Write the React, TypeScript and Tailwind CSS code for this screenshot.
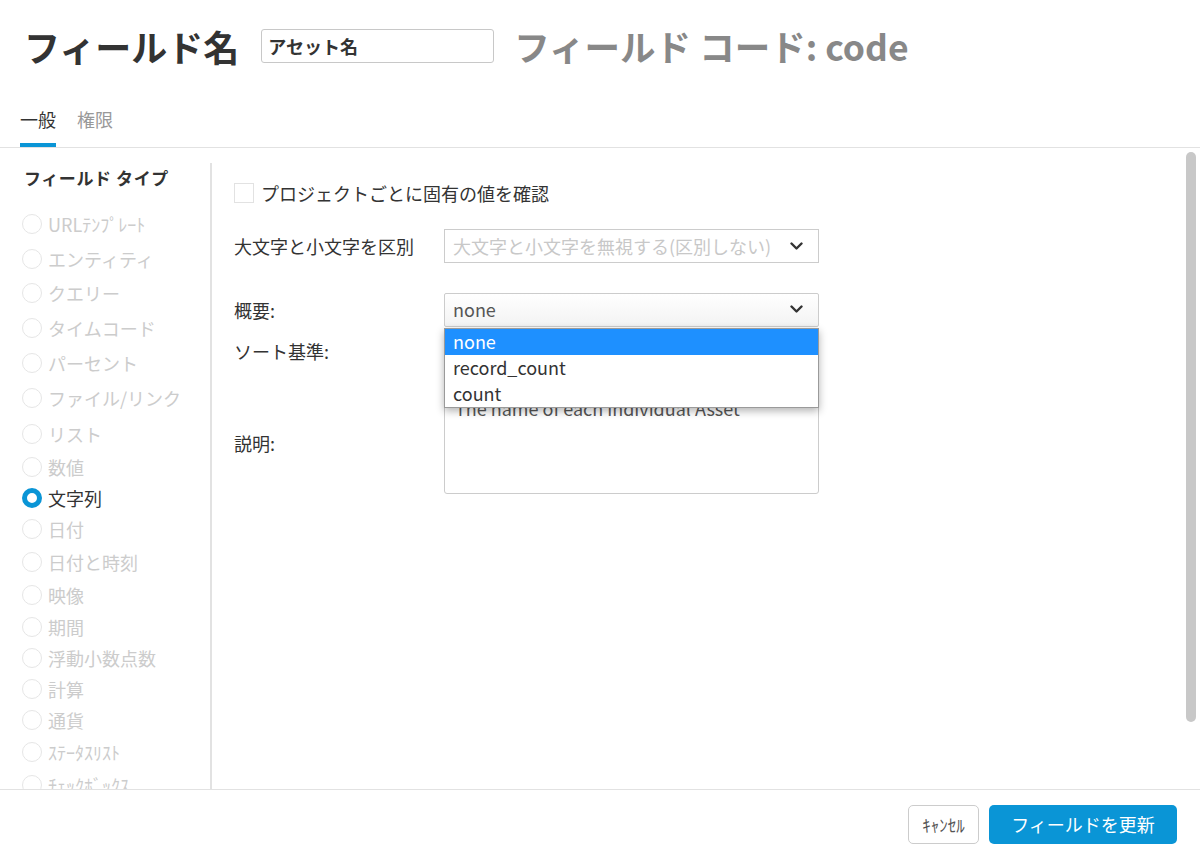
import React from 'react';

const types: [string, number][] = [
  ['URLﾃﾝﾌﾟﾚｰﾄ', 35],
  ['エンティティ', 35],
  ['クエリー', 34],
  ['タイムコード', 35],
  ['パーセント', 35],
  ['ファイル/リンク', 36],
  ['リスト', 35],
  ['数値', 32],
  ['文字列', 30],
  ['日付', 32],
  ['日付と時刻', 34],
  ['映像', 32],
  ['期間', 31],
  ['浮動小数点数', 31],
  ['計算', 31],
  ['通貨', 31],
  ['ｽﾃｰﾀｽﾘｽﾄ', 33],
  ['ﾁｪｯｸﾎﾞｯｸｽ', 34],
];

function Chevron() {
  return (
    <svg width="13" height="9" viewBox="0 0 13 9" className="shrink-0">
      <polyline points="1.5,1.5 6.5,6.5 11.5,1.5" fill="none" stroke="#333" strokeWidth="2.4" strokeLinecap="round" strokeLinejoin="round" />
    </svg>
  );
}

export default function App() {
  return (
    <div className="relative flex h-[859px] w-[1200px] flex-col overflow-hidden bg-white font-['Noto_Sans_CJK_JP','Noto_Sans',sans-serif] text-[#333]">
      {/* Header */}
      <div className="mt-6 flex h-11 items-center px-6">
        <h1 className="text-[36px] font-bold leading-none text-[#333]">フィールド名</h1>
        <div className="ml-[22px] flex h-[34px] w-[233px] items-center rounded-[3px] border border-[#c8c8c8] px-[6px] text-[18px] font-bold">
          アセット名
        </div>
        <div className="ml-[20px] text-[35.5px] font-semibold leading-none text-[#888]">
          フィールド コード: code
        </div>
      </div>

      {/* Tabs */}
      <div className="mt-[39px] flex border-b border-[#e2e2e2] pl-5">
        <div className="border-b-4 border-[#0a95d6] pb-3 text-[18px] leading-6 text-[#333]">一般</div>
        <div className="ml-[21px] pb-4 text-[18px] leading-6 text-[#999]">権限</div>
      </div>

      {/* Body */}
      <div className="relative flex min-h-0 flex-1">
        <div className="mt-[15px] w-[212px] shrink-0 overflow-hidden border-r-2 border-[#e2e2e2]">
          <div className="pl-6 pt-[3px] text-[17px] font-bold leading-6 tracking-[0.6px]">フィールド タイプ</div>
          <div className="mt-[16px]">
            {types.map(([t, h]) => {
              const sel = t === '文字列';
              return (
                <div key={t} className="flex items-center pl-[22px]" style={{ height: h }}>
                  {sel ? (
                    <span className="h-5 w-5 shrink-0 rounded-full border-[5px] border-[#0a95d6] bg-white" />
                  ) : (
                    <span className="h-5 w-5 shrink-0 rounded-full border border-[#e6e6e6]" />
                  )}
                  <span className={`ml-[6px] whitespace-nowrap text-[18px] leading-6 ${sel ? 'text-[#333]' : 'text-[#cccccc]'}`}>{t}</span>
                </div>
              );
            })}
          </div>
        </div>

        <div className="flex flex-1 flex-col pl-[22px] text-[18px]">
          <div className="mt-[33px] flex h-6 items-center">
            <span className="h-5 w-5 border border-[#e2e2e2]" />
            <span className="ml-[7px] leading-6">プロジェクトごとに固有の値を確認</span>
          </div>

          <div className="mt-6 flex items-center">
            <div className="w-[210px] leading-6">大文字と小文字を区別</div>
            <div className="flex h-[34px] w-[375px] items-center justify-between border border-[#ccc] pl-2 pr-[15px] text-[#c8c8c8]">
              <span>大文字と小文字を無視する(区別しない)</span>
              <Chevron />
            </div>
          </div>

          <div className="mt-[30px] flex items-center">
            <div className="w-[210px] leading-6">概要:</div>
            <div className="relative">
              <div className="flex h-[34px] w-[375px] items-center justify-between rounded-[2px] border border-[#ccc] bg-gradient-to-b from-white to-[#f3f3f3] pb-[2px] pl-2 pr-[15px] text-[#555]">
                <span>none</span>
                <Chevron />
              </div>
              <div className="absolute left-0 top-[35px] z-10 w-[375px] border border-[#9a9a9a] bg-white shadow-[0_3px_8px_rgba(0,0,0,0.3)]">
                <div className="flex h-[26px] items-center bg-[#1e90ff] pb-[2px] pl-2 text-white">none</div>
                <div className="flex h-[26px] items-center pb-[2px] pl-2 text-[#333]">record_count</div>
                <div className="flex h-[26px] items-center pb-[2px] pl-2 text-[#333]">count</div>
              </div>
            </div>
          </div>

          <div className="mt-[7px] flex items-center">
            <div className="w-[210px] leading-6">ソート基準:</div>
            <div className="flex h-[34px] w-[375px] items-center justify-between border border-[#ccc] pl-2 pr-[15px] text-[#555]">
              <span>none</span>
              <Chevron />
            </div>
          </div>

          <div className="mt-[10px] flex items-start">
            <div className="mt-[53px] w-[210px] leading-6">説明:</div>
            <div className="h-[116px] w-[375px] rounded-[3px] border border-[#ccc] px-[10px] pt-[17px] leading-6 text-[#555]">
              The name of each individual Asset
            </div>
          </div>
        </div>

        <div className="absolute right-[4px] top-[4px] h-[570px] w-[10px] rounded-full bg-[#c8c8c8]" />
      </div>

      {/* Footer */}
      <div className="flex h-[70px] shrink-0 items-center justify-end gap-[10px] border-t border-[#e2e2e2] pr-[23px]">
        <button className="flex h-[39px] w-[71px] items-center justify-center rounded-[5px] border border-[#ccc] bg-white text-[17px] text-[#555]">
          ｷｬﾝｾﾙ
        </button>
        <button className="flex h-[39px] w-[188px] items-center justify-center rounded-[5px] bg-[#0a95d6] text-[18px] text-white">
          フィールドを更新
        </button>
      </div>
    </div>
  );
}
